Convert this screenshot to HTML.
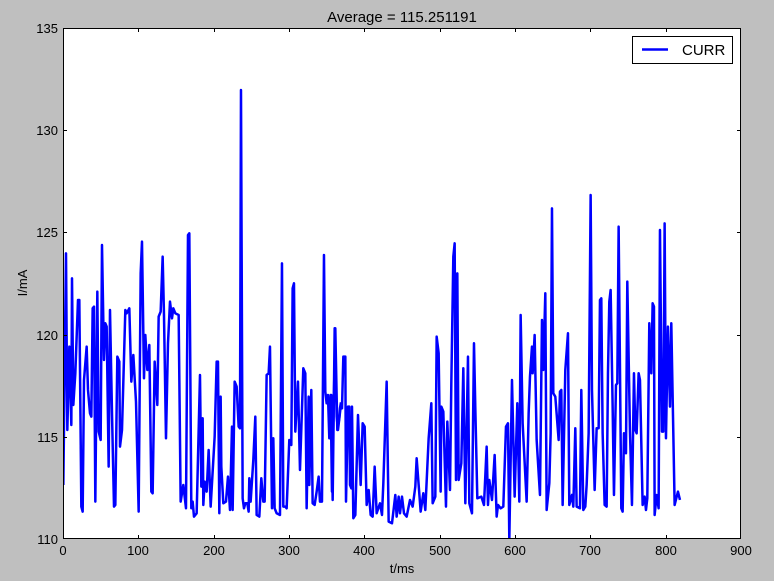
<!DOCTYPE html>
<html><head><style>
body{margin:0;background:#bfbfbf;}
svg{display:block;font-family:"Liberation Sans",sans-serif;}
</style></head><body>
<svg width="774" height="581" viewBox="0 0 774 581">
<rect width="774" height="581" fill="#bfbfbf"/>
<rect x="63" y="28" width="678" height="511" fill="#fff"/>
<defs><clipPath id="c"><rect x="63" y="28" width="678" height="511"/></clipPath></defs>
<g clip-path="url(#c)" fill="none" stroke="#0000ff" stroke-width="2.5" stroke-linejoin="round">
<polyline vector-effect="non-scaling-stroke" transform="translate(60,80) scale(0.3333)" points="10,1215 18,520 22,1050 28,800 34,1035 36,595 40,975 46,880 54,660 58,660 64,1280 68,1295 72,900 80,800 84,930 90,1000 94,1010 98,685 102,680 106,1265 112,635 116,1055 122,1080 126,495 132,840 136,730 140,740 146,1160 150,690 156,1000 162,1280 166,1275 172,830 178,845 180,1100 186,1050 196,690 200,700 208,685 214,905 220,825 228,965 236,1295 242,580 246,485 252,895 256,765 262,870 268,795 274,1235 278,1240 284,845 292,975 296,710 302,695 308,530 312,705 318,1075 324,790 330,665 336,715 340,685 346,700 356,705 362,1265 370,1215 378,1285 384,465 388,460 394,1285 398,1265 402,1310 410,1300 420,885 424,1220 428,1015 430,1275 434,1205 440,1235 446,1110 452,1280 464,1070 470,845 474,845 478,1300 482,950 484,1160 490,1270 498,1265 504,1190 510,1290 516,1040 518,1290 524,905 530,920 536,1040 540,1045 543,30 548,1255 552,1285 556,1270 562,1270 566,1295 568,1195 572,1265 580,1140 586,1010 590,1305 598,1310 604,1195 610,1265 614,1265 620,885 626,880 630,800 636,1285 640,1075 644,1285 650,1300 660,1305 666,550 670,1280 676,1280 680,1285 688,1080 694,1095 698,625 702,610 706,1055 714,905 720,1170 730,865 736,880 740,1285 746,950 748,1215 754,930 758,1270 764,1275 770,1235 776,1190 780,1265 786,1265 792,525 796,935 800,970 804,945 808,1075 812,945 816,1235 826,745 832,1050 838,1015 840,985 843,967"/>
<polyline vector-effect="non-scaling-stroke" transform="translate(320,80) scale(0.3333)" points="33,967 34,945 38,1260 44,745 50,1010 54,1050 62,980 66,985 70,830 76,830 78,1265 84,980 88,980 90,1215 94,1225 96,980 100,1315 106,1305 114,1005 122,1215 128,1030 134,1040 140,1275 146,1230 152,1305 158,1310 164,1160 170,1300 180,1270 186,1305 190,1210 200,905 206,1325 216,1330 226,1245 230,1310 236,1250 240,1300 246,1250 252,1300 260,1310 270,1260 278,1280 286,1220 290,1135 302,1295 310,1240 316,1290 326,1075 334,970 338,1270 346,1250 350,770 356,820 362,1235 364,980 370,995 378,1280 382,1025 390,1230 394,910 400,530 404,490 408,1200 412,580 416,1200 424,1150 430,865 436,1270 444,830 448,1270 456,1300 462,790 466,985 472,1255 484,1250 492,1275 500,1100 504,1275 508,1200 516,1260 524,1125 530,1310 534,1275 542,1285 550,1280 558,1040 564,1030 568,1380 576,900 584,1250 592,970 598,1265 602,705 608,1030 620,1265 626,1000 630,890 636,800 638,880 644,765 650,1080 660,1245 666,720 670,870 676,640 680,1290 688,1210 692,1060 696,385 700,940 706,950 716,1080 720,935 724,930 728,1275 736,870 744,760 748,1275 756,1245 760,1280 766,1045 770,1280 780,1285 784,930 790,1290 796,1280 800,1215 806,1060 812,345 816,930 824,1230 830,1045 836,1045 840,660 844,655 848,1060 854,1275 860,1280 864,880 868,665 872,630 878,980 882,1245 888,915 892,910 896,440 904,1285 908,1295 912,1060 918,1120 922,605 930,1055 936,1275 942,880 946,1050 950,1060 956,880 960,900 968,1275 974,1250 978,1290 982,1255 988,730 994,880 998,670 1002,680 1004,1305 1010,1245 1016,1285 1020,450 1026,1055 1030,1055 1034,430 1038,1075 1044,740 1050,980 1054,730 1064,1275 1074,1235 1080,1260"/>
</g>
<g stroke="#000" stroke-width="1">
<rect x="63.5" y="28.5" width="677" height="510" fill="none"/>
<path d="M138.5 539v-4M214.5 539v-4M289.5 539v-4M364.5 539v-4M440.5 539v-4M515.5 539v-4M590.5 539v-4M666.5 539v-4M138.5 28v4M214.5 28v4M289.5 28v4M364.5 28v4M440.5 28v4M515.5 28v4M590.5 28v4M666.5 28v4"/>
<path d="M63 437.5h4M63 335.5h4M63 232.5h4M63 130.5h4M741 437.5h-4M741 335.5h-4M741 232.5h-4M741 130.5h-4"/>
</g>
<g font-size="13" fill="#000" text-anchor="end">
<text x="58" y="544">110</text><text x="58" y="442">115</text><text x="58" y="340">120</text><text x="58" y="237">125</text><text x="58" y="135">130</text><text x="58" y="33">135</text>
</g>
<g font-size="13" fill="#000" text-anchor="middle">
<text x="63" y="555">0</text><text x="138" y="555">100</text><text x="214" y="555">200</text><text x="289" y="555">300</text><text x="364" y="555">400</text><text x="440" y="555">500</text><text x="515" y="555">600</text><text x="590" y="555">700</text><text x="666" y="555">800</text><text x="741" y="555">900</text>
<text x="402" y="573">t/ms</text>
<text x="402" y="22" font-size="15">Average = 115.251191</text>
<text transform="translate(27,283) rotate(-90)">I/mA</text>
</g>
<rect x="632.5" y="36.5" width="100" height="27" fill="#fff" stroke="#000"/>
<line x1="642" y1="49.5" x2="668" y2="49.5" stroke="#0000ff" stroke-width="2.5"/>
<text x="682" y="55" font-size="15">CURR</text>
</svg>
</body></html>
